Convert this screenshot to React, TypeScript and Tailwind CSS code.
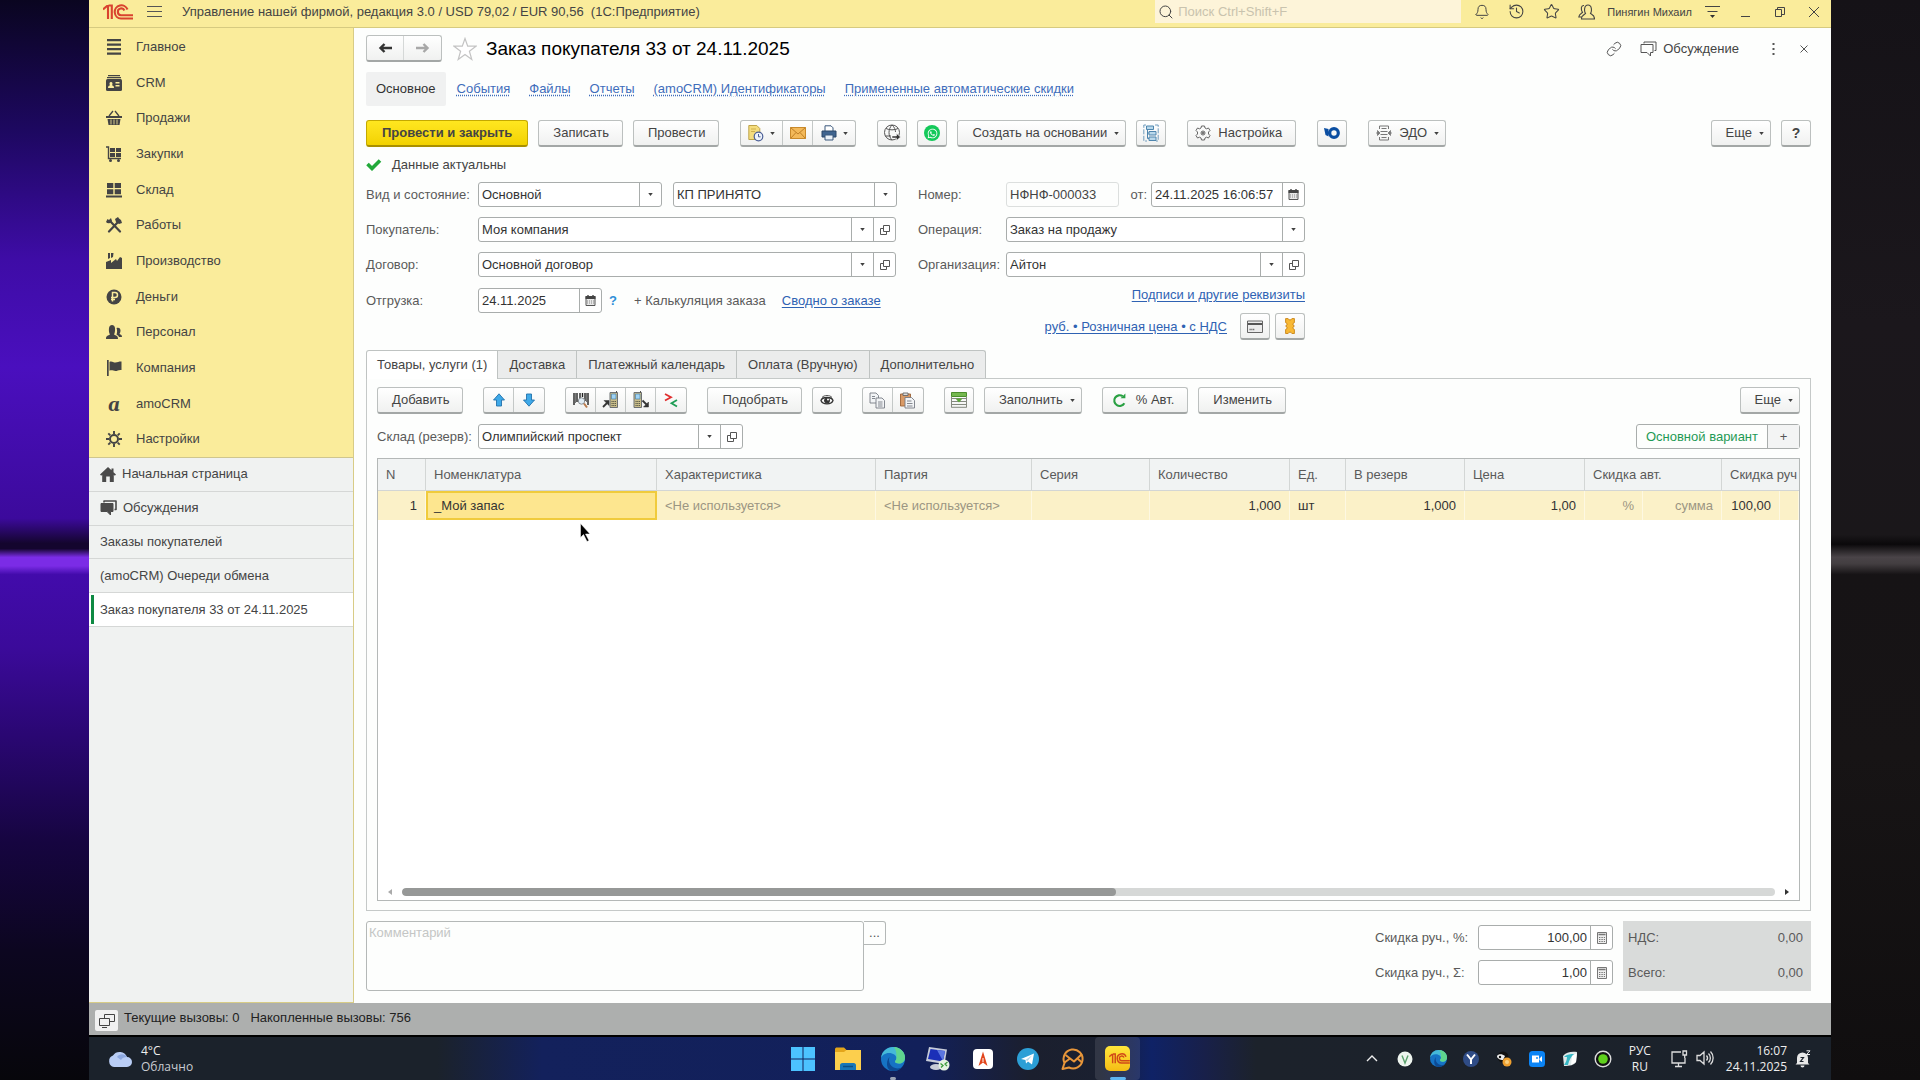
import React from 'react';
import { Bell, History, Link, Search, Star } from 'lucide-react';
import { FaWhatsapp } from 'react-icons/fa';

const LogoIcon: React.FC<{ className?: string }> = ({ className }) => (
  <svg viewBox="0 0 30 16" className={className} fill="none" stroke="currentColor" strokeWidth="2.1">
    <path d="M0 5.5 4 2H5V15M8.8 15V1.500H5.5" />
    <path d="M24.5 5.5A6.6 6.6 0 1 0 18 14.5H30" />
    <path d="M21.4 6.500A3.4 3.4 0 1 0 18 11.2H30" />
  </svg>
);

const Caret = () => (
  <svg viewBox="0 0 6 4" className="h-[3px] w-[5px] shrink-0" fill="#404040">
    <path d="M0 0h6L3 4z" />
  </svg>
);

const OpenIcon = () => (
  <svg viewBox="0 0 10 10" className="size-2.5" fill="none" stroke="#555" strokeWidth="1">
    <path d="M3.5.5h6v6h-6zM3.5 3.5h-3v6h6v-3" />
  </svg>
);

const CalendarIcon = () => (
  <svg viewBox="0 0 11 11" className="size-[11px]">
    <path d="M1 1.5h9v9H1z" fill="#e8e8e8" stroke="#555" />
    <path d="M.5 1h10v3H.5z" fill="#444" />
    <path d="M3 0v2M8 0v2" stroke="#444" strokeWidth="1.4" />
    <path d="M2 6h7M2 8h7" stroke="#888" strokeDasharray="1 1" />
  </svg>
);

const CalcIcon = () => (
  <svg viewBox="0 0 10 12" className="h-3 w-2.5" fill="none">
    <path d="M.5.5h9v11h-9z" stroke="#777" fill="#eee" />
    <path d="M1.5 2.5h7" stroke="#777" strokeWidth="1.5" />
    <path d="M2 5.5h6M2 7.5h6M2 9.5h6" stroke="#777" strokeDasharray="1.4 1" />
  </svg>
);

const HomeIcon = () => (
  <svg viewBox="0 0 16 15" className="h-[15px] w-4" fill="#4a4a4a">
    <path d="M8 0l3.500 3.300V1.500h2V5.200L16 7.500 14.800 8.700 13.800 7.800V15H9.800V9.500H6.200V15H2.200V7.800L1.200 8.700 0 7.500z" />
  </svg>
);

const ChatIcon: React.FC<{ filled?: boolean }> = ({ filled }) => (
  <svg viewBox="0 0 17 16" className="h-4 w-[17px] shrink-0" fill={filled ? '#4a4a4a' : 'none'} stroke={filled ? '#4a4a4a' : '#555'} strokeLinejoin="round">
    <path d="M4 2.5V1h12v8.5h-1.5" fill="none" strokeWidth={filled ? 1.6 : 1} />
    <path d="M1 3.5h12v8h-2.5v3.5L7 11.500H1z" />
  </svg>
);

const sectionIcons: Record<string, React.ReactNode> = {
  main: <path d="M1 0h14v2.200H1zM1 4.500h14v2.200H1zM1 9h14v2.200H1zM1 13.500h14v2.200H1z" />,
  crm: (
    <>
      <path d="M2 0h12v1.3H2zM1 2h14v1.3H1z" />
      <rect x="0" y="4" width="16" height="12" rx="1.5" />
      <path d="M2 13c0-2 1-2.5 2-2.5-1-2-.5-3.5 1-3.5s2 1.500 1 3.5c1 0 2 .5 2 2.5zM9.5 7h4v1.5h-4zM9.5 10h4v1.5h-4z" fill="#faec9b" />
    </>
  ),
  sales: (
    <>
      <path d="M0 6h16v2H0zM1.5 9h13l-1 6h-11z" />
      <path d="M3 6l4-5M13 6 9 1" stroke="currentColor" strokeWidth="1.3" />
      <path d="M5 9.5v5M8 9.5v5M11 9.5v5" stroke="#faec9b" strokeWidth=".8" />
    </>
  ),
  purchases: (
    <>
      <path d="M4 2h5v4H4zM10 2h5v4h-5zM4 7h5v4H4zM10 7h5v4h-5z" />
      <path d="M0 1h2.5v11.5H15" fill="none" stroke="currentColor" strokeWidth="1.4" />
      <circle cx="4.5" cy="14.5" r="1.5" />
      <circle cx="12.5" cy="14.5" r="1.5" />
    </>
  ),
  stock: <path d="M1 1h6.3v5H1zM8.7 1H15v5H8.7zM1 7.2h6.3v5H1zM8.7 7.2H15v5H8.7zM0 13.5h16v2H0z" />,
  works: (
    <>
      <path d="M4 4l10 10.5M12 5 3 14.5" stroke="currentColor" strokeWidth="2.2" strokeLinecap="round" />
      <path d="M0 5a3.5 3.5 0 0 0 6-1L5 1 3 3 1.5 2zM9 2l3-2 1 1.500L15 3l1 3-3 1-3-2z" />
    </>
  ),
  factory: <path d="M0 9l5-2v3l5-4 1 2 3-4 2 1v11H0zM2 0h2v5L2 6zM5 0h2.5L7 4 5 5z" />,
  money: (
    <>
      <circle cx="8" cy="8" r="7.5" />
      <path d="M6.5 12.5v-9H9a2.5 2.5 0 0 1 0 5H5M5 10.5h4" fill="none" stroke="#faec9b" strokeWidth="1.5" />
    </>
  ),
  staff: (
    <>
      <path d="M0 15c0-3 1-3 4-4.5C3 9 2.7 7 3 4c.3-2 1.500-3 3-3s2.8 1 3 3c.2 3-.1 5-1 6.500 3 1.500 4 1.500 4 4.500z" />
      <path d="M10.5 4c2.500-1 4 .5 4 2.500 0 1.500-.5 2.500-1 3.500 1.500.8 2.500 1 2.500 3h-3c-.5-1.500-1.500-2-2.500-2.500.8-2 .8-4.500 0-6.500z" />
    </>
  ),
  company: <path d="M1 0h1.7v16H1zM3.5 2c2-1.500 4 .8 6 .5s3-1 6-1v8.500c-3-.5-4 1-6 1s-4-1.500-6-.2z" />,
  settings: (
    <>
      <circle cx="8" cy="8" r="4" fill="none" stroke="currentColor" strokeWidth="2" />
      <path d="M8 0v3M8 13v3M0 8h3M13 8h3M2.3 2.3l2 2M11.7 11.7l2 2M2.3 13.7l2-2M11.7 4.3l2-2" stroke="currentColor" strokeWidth="1.9" />
    </>
  ),
};

const sections = [
  { icon: 'main', title: 'Главное' },
  { icon: 'crm', title: 'CRM' },
  { icon: 'sales', title: 'Продажи' },
  { icon: 'purchases', title: 'Закупки' },
  { icon: 'stock', title: 'Склад' },
  { icon: 'works', title: 'Работы' },
  { icon: 'factory', title: 'Производство' },
  { icon: 'money', title: 'Деньги' },
  { icon: 'staff', title: 'Персонал' },
  { icon: 'company', title: 'Компания' },
  { icon: 'amo', title: 'amoCRM' },
  { icon: 'settings', title: 'Настройки' },
];

const openWindows = [
  { title: 'Начальная страница', icon: <HomeIcon /> },
  { title: 'Обсуждения', icon: <ChatIcon filled /> },
  { title: 'Заказы покупателей' },
  { title: '(amoCRM) Очереди обмена' },
  { title: 'Заказ покупателя 33 от 24.11.2025', active: true },
];

const formLinks = ['События', 'Файлы', 'Отчеты', '(amoCRM) Идентификаторы', 'Примененные автоматические скидки'];
const tabs = ['Товары, услуги (1)', 'Доставка', 'Платежный календарь', 'Оплата (Вручную)', 'Дополнительно'];

const buttonLook =
  'flex h-[27px] shrink-0 items-center justify-center whitespace-nowrap rounded-[3px] border border-b-2 border-[#bcc0bf] border-b-[#a3a7a6] bg-linear-to-b from-white to-[#f0f1f0] text-[#444] hover:to-[#e4e6e5]';

const TextButton: React.FC<{ children: React.ReactNode; icon?: React.ReactNode; menu?: boolean }> = ({ children, icon, menu }) => (
  <button type="button" className={`${buttonLook} ${icon ? 'gap-[7px] pl-[7px]' : 'gap-[7px] pl-3.5'} ${menu ? 'pr-1.5' : 'pr-[13px]'}`}>
    {icon}
    {children}
    {menu && <Caret />}
  </button>
);

const IconButton: React.FC<{ children: React.ReactNode; title: string }> = ({ children, title }) => (
  <button type="button" title={title} aria-label={title} className={`${buttonLook} w-[30px]`}>
    {children}
  </button>
);

interface GroupItem {
  title: string;
  icon: React.ReactNode;
  menu?: boolean;
}

const ButtonGroup: React.FC<{ items: GroupItem[] }> = ({ items }) => (
  <div className={`${buttonLook} divide-x divide-[#c4c8c7]`}>
    {items.map((item) => (
      <button
        key={item.title}
        type="button"
        title={item.title}
        aria-label={item.title}
        className={`flex h-full items-center justify-center gap-1.5 ${item.menu ? 'w-[42px]' : 'w-[30px]'}`}
      >
        {item.icon}
        {item.menu && <Caret />}
      </button>
    ))}
  </div>
);

const fieldLook = 'flex h-[25px] shrink-0 rounded-[3px] border border-[#a9adac] bg-white text-[#333]';
const cellLook = 'flex w-[22px] shrink-0 items-center justify-center border-l border-[#a9adac]';

const SelectField: React.FC<{ id: string; value: string; width: string; open?: boolean; label?: string }> = ({ id, value, width, open, label }) => (
  <div className={`${fieldLook} ${width}`}>
    <select id={id} aria-label={label} className="min-w-0 flex-1 appearance-none bg-transparent px-[3px] outline-none">
      <option>{value}</option>
    </select>
    <span className={cellLook}><Caret /></span>
    {open && <button type="button" aria-label="Открыть" className={cellLook}><OpenIcon /></button>}
  </div>
);

const InputField: React.FC<{ id: string; value: string; width: string; icon: React.ReactNode; action: string; right?: boolean }> = ({ id, value, width, icon, action, right }) => (
  <div className={`${fieldLook} ${width}`}>
    <input id={id} defaultValue={value} className={`min-w-0 flex-1 bg-transparent px-[3px] outline-none ${right ? 'text-right' : ''}`} />
    <button type="button" aria-label={action} className={cellLook}>{icon}</button>
  </div>
);

const Label: React.FC<{ htmlFor: string; children: string; width: string }> = ({ htmlFor, children, width }) => (
  <label htmlFor={htmlFor} className={`shrink-0 whitespace-nowrap text-[#5a5a5a] ${width}`}>{children}</label>
);

const PhoneIcon: React.FC<{ out?: boolean }> = ({ out }) => (
  <svg viewBox="0 0 18 18" className="size-[18px]">
    <g transform={out ? 'translate(-6 0)' : undefined}>
      <path d="M8 1.500h7.500v15H8z" fill="#c9bd8a" stroke="#6d7073" />
      <path d="M9.500 3h4.500v5H9.500z" fill="#9fd3f5" stroke="#4f83a8" strokeWidth=".7" />
      <path d="M9.500 10.500h4.500M9.500 12.500h4.500M9.500 14.500h4.500" stroke="#5c5c4a" strokeDasharray="1.2 .5" />
      <path d="M14.500 0v2" stroke="#555" />
    </g>
    {out ? (
      <g fill="#333" stroke="#333">
        <path d="M10.500 9.500l4 4" strokeWidth="1.8" />
        <path d="M16.500 11v5h-5z" strokeWidth=".5" />
      </g>
    ) : (
      <g fill="#333" stroke="#333">
        <path d="M1 16l4-4" strokeWidth="1.8" />
        <path d="M2 9.500h5v5z" strokeWidth=".5" />
      </g>
    )}
  </svg>
);

const ArrowIcon: React.FC<{ down?: boolean }> = ({ down }) => (
  <svg viewBox="0 0 14 14" className={`size-3.5 ${down ? 'rotate-180' : ''}`}>
    <path d="M7 .8 12.500 7H9.500v6h-5V7H1.500z" fill="#3fa9e8" stroke="#2272ab" strokeWidth=".9" />
  </svg>
);

const PaperIcon = () => (
  <svg viewBox="0 0 16 18" className="h-[18px] w-4">
    <path d="M.8 1.500h8l3 3v11h-11z" fill="#f5dd7e" stroke="#b89c3d" strokeWidth=".9" />
    <path d="M3 5h5M3 7.500h4" stroke="#cfb04d" />
    <circle cx="10.500" cy="12.500" r="4.300" fill="#eef3fb" stroke="#4b5f96" strokeWidth="1.2" />
    <path d="M10.500 10v2.800h2" fill="none" stroke="#4b5f96" />
  </svg>
);

const MailIcon = () => (
  <svg viewBox="0 0 16 12" className="h-3 w-4">
    <path d="M.5.5h15v11H.5z" fill="#f3b95a" stroke="#c98a2b" />
    <path d="M.5.5 8 7 15.500.5M.5 11.500 6 5.500M15.500 11.500 10 5.500" fill="none" stroke="#b97820" strokeWidth=".9" />
  </svg>
);

const PrinterIcon = () => (
  <svg viewBox="0 0 16 16" className="size-4">
    <path d="M4 .8h6l2 2V7H4z" fill="#fff" stroke="#3b587c" />
    <path d="M1 6h14v6H1z" fill="#3f648f" stroke="#2b4768" />
    <path d="M4 10h8v5H4z" fill="#e9f0f7" stroke="#3b587c" />
  </svg>
);

const GlobeIcon = () => (
  <svg viewBox="0 0 18 18" className="size-[18px]" fill="none" stroke="#555">
    <circle cx="9" cy="8.500" r="7.500" />
    <path d="M9 1c-4 4-4 11 0 15M9 1c2.500 2 3.500 5 3.500 7M3 4.500c3 1.800 9 1.800 12 0M2 12h6" />
    <path d="M9 12h4.500V9.500L17.500 13l-4 3.500V14H9z" fill="#333" stroke="#fff" strokeWidth=".5" />
  </svg>
);

const StructureIcon = () => (
  <svg viewBox="0 0 16 18" className="h-[18px] w-4" fill="none" stroke="#4f86ae">
    <path d="M3 1H.8v16H4M12 1h3.200v16H13" strokeDasharray="5 1.5" strokeWidth=".8" />
    <path d="M3.500 2h7v3.500h-7zM6 7.500h7V11H6zM6 13h7v3.500H6z" fill="#b9d8eb" />
    <path d="M4.500 5.500v9H6M4.500 9H6" />
  </svg>
);

const GearIcon = () => (
  <svg viewBox="0 0 16 16" className="size-4" fill="none" stroke="#666">
    <path d="M6.500 1h3l.5 2 1.500.8 2-.8 1.500 2.500L13.500 7v2l1.500 1.500-1.500 2.500-2-.8-1.500.8-.5 2h-3L6 13l-1.500-.8-2 .8L1 10.500 2.500 9V7L1 5.500 2.500 3l2 .8L6 3z" />
    <circle cx="8" cy="8" r="2" />
    <circle cx="8" cy="8" r=".8" fill="#666" />
  </svg>
);

const EdoIcon = () => (
  <svg viewBox="0 0 16 16" className="size-4" fill="none" stroke="#777">
    <path d="M3.500 4V1h9v3M3.500 12v3h9v-3M5.500 3.500h5M4.500 6.500h7M4.500 9.500h7M5.500 12.500h5" />
    <path d="M0 8h3M1.500 5.500 4 8l-2.500 2.500zM16 8h-3M14.500 5.500 12 8l2.500 2.500z" fill="#777" strokeWidth=".8" />
  </svg>
);

const BarcodeIcon = () => (
  <svg viewBox="0 0 18 18" className="size-[18px]" fill="none">
    <path d="M2 2v12M5 2v9M8 2v7M10.500 2v4M13 2v8M16 2v12" stroke="#222" strokeWidth="1.4" />
    <path d="M3.500 2v10M14.500 2v9" stroke="#222" strokeWidth=".6" />
    <circle cx="9.500" cy="10" r="3.200" fill="#e1edf5" stroke="#8a8f94" />
    <path d="M12 12.500l3 4" stroke="#b97b4d" strokeWidth="2" />
  </svg>
);

const CompareIcon = () => (
  <svg viewBox="0 0 16 16" className="size-4" fill="none" strokeWidth="1.8">
    <path d="M2 2l6 3.200L2 8.500" stroke="#e02f2f" />
    <path d="M14 8 8.500 11.200 14 14.500" stroke="#1f9e56" />
  </svg>
);

const EyeIcon = () => (
  <svg viewBox="0 0 14 12" className="h-3 w-3.5" fill="none" stroke="#333" strokeWidth="1.3">
    <path d="M1 6.500C2 2.500 12 2.500 13 6.500 11.500 11 2.500 11 1 6.500z" />
    <circle cx="7" cy="6.500" r="2.300" fill="#333" />
    <circle cx="8" cy="5.500" r="1" fill="#fff" stroke="none" />
    <path d="M2 3.500C4 .8 10 .8 12 3.500" strokeWidth=".8" />
  </svg>
);

const CopyIcon = () => (
  <svg viewBox="0 0 17 17" className="size-[17px]" fill="#f2f4f6" stroke="#777c85" strokeWidth=".9">
    <path d="M1 1h6l2.500 2.500V11H1z" />
    <path d="M7 6h6l2.500 2.500V16H7z" />
    <path d="M3 4.500h3M3 6.500h3M9 10h4.500M9 12h4.500M9 14h4.500" />
  </svg>
);

const PasteIcon = () => (
  <svg viewBox="0 0 17 17" className="size-[17px]" strokeWidth=".9">
    <path d="M1.500 2h10v12h-10z" fill="#d99a66" stroke="#9c6236" />
    <path d="M4 1h5v2.500H4z" fill="#ddd" stroke="#666" />
    <path d="M6 5.500h6.500L15.500 8.500V16H6z" fill="#f2f4f6" stroke="#777c85" />
    <path d="M8 9h4.500M8 11.500h5.500M8 14h5.500" stroke="#777c85" />
  </svg>
);

const InsertRowsIcon = () => (
  <svg viewBox="0 0 16 16" className="size-4" fill="none">
    <path d="M.5.5h15v4H.5z" fill="#75b84f" stroke="#4b8d2d" />
    <path d="M.5 6.500h15M.5 9.500h15M.5 12.500h15M.5 15.300h15M.5 5v10.500M15.500 5v10.500" stroke="#84897f" />
    <path d="M4.500 6.500h7L8 10.500z" fill="#5aa637" />
  </svg>
);

const RefreshIcon = () => (
  <svg viewBox="0 0 14 14" className="mx-0.5 size-[15px]" fill="none" stroke="#2aa043" strokeWidth="2">
    <path d="M11.500 9.500A5 5 0 1 1 10 3" />
    <path d="M8 4.800h4.500V.5z" fill="#2aa043" stroke="none" />
  </svg>
);

const CardIcon = () => (
  <svg viewBox="0 0 16 13" className="h-[13px] w-4" fill="none">
    <path d="M.5 1h15v11.500H.5z" fill="#ececec" stroke="#666" />
    <path d="M1 4h14" stroke="#555" strokeWidth="2" />
    <path d="M2.500 9.500h5" stroke="#666" strokeWidth="1.5" strokeDasharray="1.2 .6" />
  </svg>
);

const TicketIcon = () => (
  <svg viewBox="0 0 10 16" className="h-4 w-2.5">
    <path d="M.6.6h2.500a2 2 0 0 0 3.800 0h2.500v4L8 5.500V7l1.400 1L8 9v1.500l1.400 1v4H6.900a2 2 0 0 0-3.800 0H.6v-4l1.400-1V9L.6 8 2 7V5.500L.6 4.600z" fill="#f8b834" stroke="#c98516" strokeWidth=".9" />
  </svg>
);

const UsersIcon = () => (
  <svg viewBox="0 0 17 16" className="h-4 w-[17px]" fill="none" stroke="#444" strokeWidth="1.1">
    <path d="M6 1.500C3 1 2.500 5 4.500 8.500 2.500 10 1 10.500 .8 13H4" />
    <path d="M7.500 9.500C6 7 6 1 10 1s4 6 2.500 8.500c2.500 1.500 4 1.500 4 5.500h-13c0-3.500 1.500-4 4-5.500z" />
  </svg>
);

const TopBar = () => (
  <header className="flex h-7 shrink-0 items-center border-b border-[#d6ca80] bg-[#faec9b] pb-1 pl-3.5 text-[#444]">
    <LogoIcon className="h-4 w-[30px] shrink-0 text-[#d9432f]" />
    <button type="button" aria-label="Меню" className="ml-3.5 flex w-[15px] flex-col gap-1">
      <span className="h-px bg-[#555]" />
      <span className="h-px bg-[#555]" />
      <span className="h-px bg-[#555]" />
    </button>
    <h1 className="ml-5 flex-1 whitespace-pre">{'Управление нашей фирмой, редакция 3.0 / USD 79,02 / EUR 90,56  (1С:Предприятие)'}</h1>
    <div className="mr-[3px] flex h-full w-[306px] items-center gap-1 bg-[#fdf4d9] pl-[3px]">
      <Search size={16} strokeWidth={1.5} color="#444" />
      <input aria-label="Поиск" placeholder="Поиск Ctrl+Shift+F" className="min-w-0 flex-1 bg-transparent outline-none placeholder:text-[#c9c3ae]" />
    </div>
    {[
      { title: 'Оповещения', icon: <Bell size={16} strokeWidth={1.5} /> },
      { title: 'История', icon: <History size={17} strokeWidth={1.5} /> },
      { title: 'Избранное', icon: <Star size={17} strokeWidth={1.5} /> },
      { title: 'Пользователь', icon: <UsersIcon /> },
    ].map((item) => (
      <button key={item.title} type="button" title={item.title} className="flex w-[35px] justify-center">
        {item.icon}
      </button>
    ))}
    <span className="px-[3px] text-[11px]">Пинягин Михаил</span>
    <button type="button" aria-label="Сервис" className="flex w-[34px] justify-center">
      <svg viewBox="0 0 15 14" className="h-3.5 w-[15px]" stroke="#444" fill="#333"><path d="M0 1.500h15M2.500 6.500h10" /><path d="M5 10h5l-2.500 3z" stroke="none" /></svg>
    </button>
    <button type="button" aria-label="Свернуть" className="flex w-[34px] justify-center">
      <svg viewBox="0 0 10 10" className="size-2.5" stroke="#444"><path d="M0 9.500h9" /></svg>
    </button>
    <button type="button" aria-label="Восстановить" className="flex w-[34px] justify-center">
      <svg viewBox="0 0 10 10" className="size-2.5" stroke="#444" fill="none"><path d="M.5 2.500h6v7h-6zM2.500 2.500v-2h7v7h-3" /></svg>
    </button>
    <button type="button" aria-label="Закрыть" className="flex w-[34px] justify-center">
      <svg viewBox="0 0 10 10" className="size-2.5" stroke="#444"><path d="M0 0l10 10M10 0 0 10" /></svg>
    </button>
  </header>
);

const Sidebar = () => (
  <aside className="flex w-[265px] shrink-0 flex-col border-r border-b border-[#d8cc86] bg-[#f0f2f1] text-[#444]">
    <nav className="flex h-[430px] flex-col border-b border-[#cfc68e] bg-[#faec9b] pt-px">
      {sections.map((section) => (
        <button key={section.title} type="button" className="flex flex-1 items-center gap-3.5 pl-[17px] text-left hover:bg-[#f5e27c]">
          {section.icon === 'amo' ? (
            <span className="w-4 text-center font-serif text-[21px] leading-4 font-bold italic">a</span>
          ) : (
            <svg viewBox="0 0 16 16" className="size-4" fill="currentColor">{sectionIcons[section.icon]}</svg>
          )}
          {section.title}
        </button>
      ))}
    </nav>
    <nav className="flex h-[169px] flex-col">
      {openWindows.map((item) => (
        <button
          key={item.title}
          type="button"
          className={`flex flex-1 items-center gap-1.5 border-b border-[#d5d7d6] text-left ${
            item.active ? 'bg-white pl-0.5' : 'pl-[11px]'
          }`}
        >
          {item.active && <span className="h-[29px] w-[3px] bg-[#0e8a43]" />}
          {item.icon}
          {item.title}
        </button>
      ))}
    </nav>
  </aside>
);

const FormHeader = () => (
  <>
    <div className="flex h-[25px] items-center">
      <div className={`${buttonLook} divide-x divide-[#d5d8d7]`}>
        {[false, true].map((forward) => (
          <button key={String(forward)} type="button" aria-label={forward ? 'Вперед' : 'Назад'} className="flex h-full w-[37px] items-center justify-center">
            <svg viewBox="0 0 14 12" className={`h-3 w-3.5 ${forward ? 'rotate-180' : ''}`} fill="none" stroke={forward ? '#a8a8a8' : '#333'} strokeWidth="2.4">
              <path d="M14 6H2M6.500 2 2.500 6l4 4" />
            </svg>
          </button>
        ))}
      </div>
      <button type="button" aria-label="В избранное" className="ml-[11px]">
        <svg viewBox="0 0 24 24" className="size-6" fill="#fff" stroke="#c3c3c3" strokeWidth="1.2">
          <path d="M12 1.500l2.700 7.700h8.300l-6.600 5 2.400 8.300L12 17.600l-6.800 4.900 2.400-8.300L1 9.200h8.300z" />
        </svg>
      </button>
      <h2 className="ml-[9px] flex-1 text-[19px] text-black">Заказ покупателя 33 от 24.11.2025</h2>
      <button type="button" aria-label="Ссылка"><Link size={16} strokeWidth={1.5} color="#555" /></button>
      <button type="button" className="ml-[18px] flex items-center gap-1.5 text-[#444]">
        <ChatIcon />
        Обсуждение
      </button>
      <button type="button" aria-label="Действия" className="ml-[27px] flex w-3.5 justify-center">
        <svg viewBox="0 0 3 12" className="h-3 w-[3px]" fill="#555"><path d="M.5 0h2v2h-2zM.5 5h2v2h-2zM.5 10h2v2h-2z" /></svg>
      </button>
      <button type="button" aria-label="Закрыть форму" className="ml-[17px] flex w-3.5 justify-center">
        <svg viewBox="0 0 8 8" className="size-2" stroke="#555"><path d="M.5.5l7 7M7.500.5l-7 7" /></svg>
      </button>
    </div>

    <nav className="mt-[11px] flex h-[34px] items-center gap-[19px]">
      <span className="-mr-2 flex h-full items-center rounded-xs bg-[#f0f1f1] px-2.5 text-[#333]">Основное</span>
      {formLinks.map((link) => (
        <a key={link} href="#" className="text-[#3f6dbb] underline decoration-dotted underline-offset-2">{link}</a>
      ))}
    </nav>

    <div className="mt-3.5 flex items-center gap-[21px]">
      <div className="flex gap-2.5">
        <button type="button" className="h-[27px] rounded-[3px] border border-b-2 border-[#c4a900] border-b-[#a99000] bg-linear-to-b from-[#ffe71f] to-[#f2d200] px-[15px] font-bold text-[#444]">
          Провести и закрыть
        </button>
        <TextButton>Записать</TextButton>
        <TextButton>Провести</TextButton>
      </div>
      <ButtonGroup
        items={[
          { title: 'Отчеты', icon: <PaperIcon />, menu: true },
          { title: 'Отправить письмо', icon: <MailIcon /> },
          { title: 'Печать', icon: <PrinterIcon />, menu: true },
        ]}
      />
      <div className="flex gap-2.5">
        <IconButton title="Открыть на сайте"><GlobeIcon /></IconButton>
        <IconButton title="WhatsApp">
          <span className="flex size-4 items-center justify-center rounded-full bg-[#14c95a] text-white"><FaWhatsapp size={11} /></span>
        </IconButton>
        <TextButton menu>Создать на основании</TextButton>
        <IconButton title="Структура подчиненности"><StructureIcon /></IconButton>
      </div>
      <TextButton icon={<GearIcon />}>Настройка</TextButton>
      <IconButton title="ЮKassa">
        <svg viewBox="0 0 16 14" className="h-3.5 w-4" fill="#0b4ea2">
          <path d="M0 2l4.500 1v7.500L1.500 9z" />
          <circle cx="10" cy="7" r="4.300" fill="none" stroke="#0b4ea2" strokeWidth="3.200" />
          <path d="M4 5.500h3v3H4z" />
        </svg>
      </IconButton>
      <TextButton icon={<EdoIcon />} menu>ЭДО</TextButton>
      <div className="ml-auto flex gap-2.5">
        <TextButton menu>Еще</TextButton>
        <button type="button" aria-label="Справка" className={`${buttonLook} w-[30px] text-[14px] font-bold`}>?</button>
      </div>
    </div>
  </>
);

const linkLook = 'text-[#2f62b3] underline underline-offset-2';

const FormFields = () => (
  <>
    <div className="flex h-[35px] items-center gap-2.5 text-[#444]">
      <svg viewBox="0 0 16 12" className="h-3 w-4" fill="none" stroke="#22a93a" strokeWidth="3.6"><path d="M1.500 5l4.500 4.500L14 1.500" /></svg>
      Данные актуальны
    </div>
    <div className="flex items-start gap-[21px]">
      <div className="flex flex-col gap-2.5">
        <div className="flex items-center">
          <Label htmlFor="kind" width="w-28">Вид и состояние:</Label>
          <SelectField id="kind" value="Основной" width="w-[184px]" />
          <span className="w-[11px]" />
          <SelectField id="state" label="Состояние" value="КП ПРИНЯТО" width="w-56" />
        </div>
        <div className="flex items-center">
          <Label htmlFor="buyer" width="w-28">Покупатель:</Label>
          <SelectField id="buyer" value="Моя компания" width="w-[418px]" open />
        </div>
        <div className="flex items-center">
          <Label htmlFor="contract" width="w-28">Договор:</Label>
          <SelectField id="contract" value="Основной договор" width="w-[418px]" open />
        </div>
        <div className="flex items-center pt-px">
          <Label htmlFor="shipment" width="w-28">Отгрузка:</Label>
          <InputField id="shipment" value="24.11.2025" width="w-[124px]" icon={<CalendarIcon />} action="Выбрать дату" />
          <button type="button" aria-label="Подсказка" className="ml-[7px] font-bold text-[#2f8fd8]">?</button>
          <button type="button" className="ml-[17px] text-[#5a5a5a]">+ Калькуляция заказа</button>
          <a href="#" className={`ml-4 ${linkLook}`}>Сводно о заказе</a>
        </div>
      </div>

      <div className="flex w-[387px] flex-col">
        <div className="flex items-center">
          <Label htmlFor="number" width="w-[88px]">Номер:</Label>
          <input id="number" defaultValue="НФНФ-000033" readOnly className="h-[25px] w-[113px] rounded-[3px] border border-[#dcdfde] px-[3px] text-[#444] outline-none" />
          <label htmlFor="date" className="flex-1 pr-1 text-right text-[#5a5a5a]">от:</label>
          <InputField id="date" value="24.11.2025 16:06:57" width="w-[154px]" icon={<CalendarIcon />} action="Выбрать дату и время" />
        </div>
        <div className="mt-2.5 flex items-center">
          <Label htmlFor="operation" width="w-[88px]">Операция:</Label>
          <SelectField id="operation" value="Заказ на продажу" width="w-[299px]" />
        </div>
        <div className="mt-2.5 flex items-center">
          <Label htmlFor="org" width="w-[88px]">Организация:</Label>
          <SelectField id="org" value="Айтон" width="w-[299px]" open />
        </div>
        <div className="flex h-9 items-center justify-end">
          <a href="#" className={linkLook}>Подписи и другие реквизиты</a>
        </div>
        <div className="flex items-center justify-end gap-[5px]">
          <a href="#" className={`mr-2 ${linkLook}`}>руб. • Розничная цена • с НДС</a>
          <IconButton title="Оплата картой"><CardIcon /></IconButton>
          <IconButton title="Скидочная карта"><TicketIcon /></IconButton>
        </div>
      </div>
    </div>
  </>
);

const columnWidths = ['w-12', 'w-[231px]', 'w-[219px]', 'w-[156px]', 'w-[118px]', 'w-[140px]', 'w-14', 'w-[119px]', 'w-[120px]', 'w-[58px]', 'w-[79px]', 'w-[58px]', ''];

const columns = [
  { title: 'N' },
  { title: 'Номенклатура' },
  { title: 'Характеристика' },
  { title: 'Партия' },
  { title: 'Серия' },
  { title: 'Количество' },
  { title: 'Ед.' },
  { title: 'В резерв' },
  { title: 'Цена' },
  { title: 'Скидка авт.', span: 2 },
  { title: 'Скидка руч', span: 2 },
];

const rowCells = [
  { text: '1', look: 'pr-2 text-right' },
  { text: '_Мой запас', look: 'border-2 border-[#f0cb3c] bg-[#fde68f] pl-1.5' },
  { text: '<Не используется>', look: 'pl-2 text-[#9b9683]' },
  { text: '<Не используется>', look: 'pl-2 text-[#9b9683]' },
  { text: '', look: '' },
  { text: '1,000', look: 'pr-2 text-right' },
  { text: 'шт', look: 'pl-2' },
  { text: '1,000', look: 'pr-2 text-right' },
  { text: '1,00', look: 'pr-2 text-right' },
  { text: '%', look: 'pr-2 text-right text-[#9b9683]' },
  { text: 'сумма', look: 'pr-2 text-right text-[#9b9683]' },
  { text: '100,00', look: 'pr-2 text-right' },
  { text: '', look: '' },
];

const GoodsTable = () => (
  <div className="relative mt-[9px] flex min-h-0 flex-1 flex-col overflow-hidden border border-[#b4b8b7] bg-white">
    <table className="w-full table-fixed border-separate border-spacing-0">
      <colgroup>
        {columnWidths.map((width, i) => <col key={i} className={width} />)}
      </colgroup>
      <thead>
        <tr className="h-8 bg-[#f1f3f3] text-left text-[#5a5a5a]">
          {columns.map((column, i) => (
            <th
              key={column.title}
              colSpan={column.span}
              className={`overflow-hidden whitespace-nowrap border-b border-[#d3d6d5] pl-2 font-normal ${i < columns.length - 1 ? 'border-r' : ''}`}
            >
              {column.title}
            </th>
          ))}
        </tr>
      </thead>
      <tbody>
        <tr className="h-[29px] bg-[#fbf1c8] text-[#333]">
          {rowCells.map((cell, i) => (
            <td key={i} className={`whitespace-nowrap ${i === 1 ? '' : 'border-r border-[#fdf8e2]'} ${cell.look}`}>{cell.text}</td>
          ))}
        </tr>
      </tbody>
    </table>

    <div className="mt-auto mb-0.5 flex h-3 items-center gap-2.5 px-2.5">
      <svg viewBox="0 0 4 6" className="h-1.5 w-1" fill="#aaa"><path d="M4 0v6L0 3z" /></svg>
      <div className="h-2 flex-1 overflow-hidden rounded-full bg-[#d6d8d7]">
        <div className="h-full w-[52%] rounded-full bg-[#969897]" />
      </div>
      <svg viewBox="0 0 4 6" className="h-1.5 w-1" fill="#333"><path d="M0 0v6l4-3z" /></svg>
    </div>

    <svg viewBox="0 0 12 19" className="absolute top-16 left-[202px] h-[19px] w-3" fill="#000" stroke="#fff" strokeWidth=".5">
      <path d="M.5.5v14l3-3 3.500 7 2-1-3.500-6.500h4.500z" />
    </svg>
  </div>
);

const GoodsPanel = () => (
  <section className="mt-2.5 flex min-h-0 flex-1 flex-col">
    <div role="tablist" className="flex h-7 shrink-0 text-[#444]">
      {tabs.map((tab, i) => (
        <button
          key={tab}
          type="button"
          role="tab"
          aria-selected={i === 0}
          className={
            i === 0
              ? 'z-10 -mb-px rounded-tl-[3px] border border-b-0 border-[#bfc3c2] bg-white px-2.5'
              : 'border-t border-r border-[#bfc3c2] bg-[#ebecec] px-[11px] last:rounded-tr-[3px]'
          }
        >
          {tab}
        </button>
      ))}
    </div>
    <div className="flex min-h-0 flex-1 flex-col border border-[#c5c9c8] px-2.5 pt-2 pb-[9px]">
      <div className="flex shrink-0 items-center gap-5">
        <TextButton>Добавить</TextButton>
        <ButtonGroup items={[{ title: 'Вверх', icon: <ArrowIcon /> }, { title: 'Вниз', icon: <ArrowIcon down /> }]} />
        <ButtonGroup
          items={[
            { title: 'Поиск по штрихкоду', icon: <BarcodeIcon /> },
            { title: 'Загрузить из ТСД', icon: <PhoneIcon /> },
            { title: 'Выгрузить в ТСД', icon: <PhoneIcon out /> },
            { title: 'Сравнить', icon: <CompareIcon /> },
          ]}
        />
        <div className="flex gap-2.5">
          <TextButton>Подобрать</TextButton>
          <IconButton title="Показать"><EyeIcon /></IconButton>
        </div>
        <ButtonGroup items={[{ title: 'Копировать', icon: <CopyIcon /> }, { title: 'Вставить', icon: <PasteIcon /> }]} />
        <div className="flex gap-2.5">
          <IconButton title="Вставить строки"><InsertRowsIcon /></IconButton>
          <TextButton menu>Заполнить</TextButton>
        </div>
        <div className="flex gap-2.5">
          <TextButton icon={<RefreshIcon />}>% Авт.</TextButton>
          <TextButton>Изменить</TextButton>
        </div>
        <div className="ml-auto"><TextButton menu>Еще</TextButton></div>
      </div>
      <div className="mt-2.5 flex shrink-0 items-center">
        <Label htmlFor="stock" width="w-[101px]">Склад (резерв):</Label>
        <SelectField id="stock" value="Олимпийский проспект" width="w-[265px]" open />
        <div className="ml-auto flex h-[25px] rounded-[3px] border border-[#a9adac]">
          <button type="button" className="px-[9px] text-[#1f9a55]">Основной вариант</button>
          <button type="button" aria-label="Добавить вариант" className="w-8 border-l border-[#a9adac] bg-[#f3f4f4] text-[#555]">+</button>
        </div>
      </div>
      <GoodsTable />
    </div>
  </section>
);

const FormFooter = () => (
  <div className="mt-2.5 flex h-[70px] shrink-0 items-start">
    <textarea aria-label="Комментарий" placeholder="Комментарий" className="h-full w-[498px] resize-none rounded-[3px] border border-[#b4b8b7] px-0.5 py-[3px] outline-none placeholder:text-[#c4c6c5]" />
    <button type="button" aria-label="Изменить комментарий" className="h-6 w-[22px] rounded-r-[3px] border border-l-0 border-[#b4b8b7] text-[#555]">...</button>
    <div className="ml-auto flex flex-col gap-2.5 pt-1">
      <div className="flex items-center">
        <Label htmlFor="discount-percent" width="w-[103px]">Скидка руч., %:</Label>
        <InputField id="discount-percent" value="100,00" width="w-[135px]" icon={<CalcIcon />} action="Калькулятор" right />
      </div>
      <div className="flex items-center">
        <Label htmlFor="discount-sum" width="w-[103px]">Скидка руч., Σ:</Label>
        <InputField id="discount-sum" value="1,00" width="w-[135px]" icon={<CalcIcon />} action="Калькулятор" right />
      </div>
    </div>
    <dl className="ml-2.5 grid h-full w-[188px] grid-cols-[auto_1fr] content-start gap-y-2.5 bg-[#d9dbda] pt-1 pr-2 pl-[5px] leading-[25px] text-[#5a5a5a]">
      <dt>НДС:</dt>
      <dd className="text-right">0,00</dd>
      <dt>Всего:</dt>
      <dd className="text-right">0,00</dd>
    </dl>
  </div>
);

const EdgeIcon: React.FC<{ className: string }> = ({ className }) => (
  <svg viewBox="0 0 24 24" className={className}>
    <circle cx="12" cy="12" r="12" fill="#1673c4" />
    <path d="M0 11C1 4 6 0 12 0c7 0 12 5 12 10.500 0 4-3 6-6 6-2.500 0-4-1-4-2 0-.8 1.500-1.500 1.500-3.500C15.500 8.500 12 6 8 6c-4 0-7 2.500-8 5z" fill="#45b9d8" />
    <path d="M13 .1C19 .5 24 5 24 10.500c0 4-3 6-6 6-2.500 0-4-1-4-2 0-.8 1.500-1.500 1.500-3.500 0-4 0-7-2.500-10.900z" fill="#5fd58e" />
    <path d="M8.500 10c-2 5 1.500 11 8 11.500 2.500 0 4-1 5-2-2 3-5.500 4.500-9.500 4.500-4 0-6-3-6-7 0-3 1-5.500 2.500-7z" fill="#0d4a94" />
  </svg>
);

const pinnedApps = [
  {
    title: 'Пуск',
    icon: <svg viewBox="0 0 24 24" className="size-6" fill="#4cc2ff"><path d="M0 0h11.500v11.500H0zM12.500 0H24v11.500H12.500zM0 12.500h11.500V24H0zM12.500 12.500H24V24H12.500z" /></svg>,
  },
  {
    title: 'Проводник',
    icon: (
      <svg viewBox="0 0 26 24" className="h-6 w-[26px]">
        <path d="M0 2.500C0 1 .8.500 2 .500h7L11.500 3H24c1.200 0 2 .8 2 2v5H0z" fill="#e3a51a" />
        <path d="M0 5h9l2.500-2H26v20H0z" fill="#fccf4d" />
        <path d="M5 23v-4.500c0-1.500.8-2.500 2.500-2.500h11c1.700 0 2.500 1 2.500 2.500V23z" fill="#1877b8" />
        <path d="M8 19.500h10" stroke="#0c4f84" strokeWidth="1.5" />
      </svg>
    ),
  },
  { title: 'Edge', icon: <EdgeIcon className="size-6" />, running: true },
  {
    title: 'Удаленный рабочий стол',
    icon: (
      <svg viewBox="0 0 24 24" className="size-6">
        <path d="M3 0 21 2.500 18.500 17 0 14z" fill="#c6cbd9" />
        <path d="M4.500 2 19 4 17 14.500 2 12z" fill="#1b2fb8" />
        <path d="M11 3l8 1-2 10z" fill="#5b76e0" />
        <ellipse cx="10" cy="20" rx="6" ry="3" fill="#c8ccd8" />
        <circle cx="18" cy="18" r="5.500" fill="#e4f1e2" />
        <path d="M14.500 16.500l2.500 2-2 2M21.500 15l-2.500 2 2 2" stroke="#3a9a3a" fill="none" strokeWidth="1.3" />
      </svg>
    ),
  },
  {
    title: 'Айтон',
    icon: <svg viewBox="0 0 20 20" className="size-5"><rect width="20" height="20" rx="4" fill="#fff" /><path d="M10 2.500 14.500 17 10 13.500 5.500 17z" fill="#e2451c" /><path d="M10 9v4" stroke="#fff" /></svg>,
  },
  {
    title: 'Telegram',
    icon: <svg viewBox="0 0 22 22" className="size-[22px]"><circle cx="11" cy="11" r="11" fill="#2c9fd6" /><path d="M4 11 17 5.500 15 16.500l-4-3-2 2-.5-3.500z" fill="#fff" /><path d="M8.500 12 15 7.500 10.500 13z" fill="#b5d5e8" /></svg>,
  },
  {
    title: 'Почта',
    icon: (
      <svg viewBox="0 0 24 24" className="size-6" fill="none" stroke="#e8963a" strokeWidth="2" strokeLinejoin="round">
        <path d="M3.500 16A9.500 9.500 0 1 1 8 20.500L1.500 22z" />
        <path d="M4.500 8l8.500 6.500L21 7M3.500 15.500 9 11.500M21 15.500l-4.500-4" />
      </svg>
    ),
  },
  {
    title: '1С:Предприятие',
    icon: <span className="flex size-[25px] items-center justify-end rounded-[5px] bg-linear-to-b from-[#ffe63a] to-[#f5bd12]"><LogoIcon className="h-[11px] w-[21px] text-[#d04818]" /></span>,
    active: true,
  },
];

const trayIcons = [
  <svg viewBox="0 0 12 7" className="h-[7px] w-3" fill="none" stroke="#eee" strokeWidth="1.4"><path d="M1 6l5-5 5 5" /></svg>,
  <svg viewBox="0 0 16 16" className="size-4"><circle cx="8" cy="8" r="7.500" fill="#eef5ef" /><path d="M5 4.500l3 7.500 3-7.500" fill="none" stroke="#5da26f" strokeWidth="1.4" /></svg>,
  <EdgeIcon className="size-[17px]" />,
  <svg viewBox="0 0 16 16" className="size-4"><circle cx="8" cy="8" r="8" fill="#2f4c86" /><path d="M4 3.500 8 8.500l4-5M8 8.500V13" fill="none" stroke="#fff" strokeWidth="2" /></svg>,
  <svg viewBox="0 0 16 16" className="size-4"><circle cx="7" cy="6" r="5.500" fill="#111" /><path d="M1 5c1-2 5-2.500 8 0l-2 4C4 9 1 7.500 1 5z" fill="#eee" /><circle cx="4" cy="6" r="1.200" fill="#111" /><circle cx="11" cy="11" r="4.500" fill="#efa02f" /><circle cx="11" cy="11" r="2" fill="#f8cf80" /></svg>,
  <svg viewBox="0 0 16 16" className="size-4"><rect width="16" height="16" rx="3.500" fill="#0b84f5" /><path d="M3 4.500h7v7H3zM10.500 7.500 13 5v6l-2.500-2z" fill="#fff" /><circle cx="8" cy="7" r=".9" fill="#0b84f5" /></svg>,
  <svg viewBox="0 0 16 16" className="size-4"><path d="M1 5c3-4 8-4.500 14-4l-1 10c-2 3-6 4-12 4z" fill="#dfe9ea" /><path d="M2 6c3-3 7-3 10-3-3 3-5 6-6 11H2c2-3 3-5 3-8z" fill="#36b7c4" /><path d="M9 14l1-9 5-3-1 9z" fill="#fff" /></svg>,
  <svg viewBox="0 0 18 18" className="size-[18px]"><circle cx="9" cy="9" r="7.800" fill="#111" stroke="#ddd" strokeWidth="1.4" /><circle cx="9" cy="9" r="4.800" fill="#5fd01c" /></svg>,
];

const Taskbar = () => (
  <footer className="grid h-[45px] shrink-0 grid-cols-[1fr_auto_1fr] items-center border-t-2 border-black bg-[linear-gradient(90deg,#1b222b_0%,#1b222b_20%,#13215c_26%,#12205a_48%,#1b1f2e_54%,#1a2030_58%,#0f2266_61%,#18204a_64%,#1c222b_67%,#1b222b_100%)] text-[12px] leading-4 text-[#eee] font-['Open_Sans','Noto_Sans',sans-serif]">
    <button type="button" className="flex items-center gap-2 pl-[18px] text-left">
      <svg viewBox="0 0 26 18" className="h-[18px] w-[26px]">
        <path d="M7 17a6 6 0 0 1-1-11.500A8 8 0 0 1 20 7a5 5 0 0 1 0 10z" fill="#b9cdf5" />
        <path d="M10 7a6 6 0 0 1 10 0c-3 0-5 1-6 3z" fill="#8da8e0" />
      </svg>
      <span className="flex flex-col">
        <span>4°C</span>
        <span className="text-[#c9ccd1]">Облачно</span>
      </span>
    </button>
    <div className="flex h-full">
      {pinnedApps.map((app) => (
        <button key={app.title} type="button" title={app.title} className={`relative flex w-[45px] items-center justify-center rounded ${app.active ? 'bg-white/10' : ''}`}>
          {app.icon}
          {app.active && <span className="absolute bottom-0 h-[3px] w-4 rounded-full bg-[#5db5f0]" />}
          {app.running && <span className="absolute bottom-0 h-[3px] w-1.5 rounded-full bg-[#9aa3b5]" />}
        </button>
      ))}
    </div>
    <div className="flex items-center justify-end pr-5">
      {trayIcons.map((icon, i) => (
        <button key={i} type="button" className="flex w-[33px] justify-center">{icon}</button>
      ))}
      <button type="button" className="ml-1.5 w-7 text-center">РУС<br />RU</button>
      <button type="button" aria-label="Сеть и звук" className="ml-4 flex gap-2">
        <svg viewBox="0 0 18 18" className="size-[18px]" fill="none" stroke="#ddd" strokeWidth="1.3"><path d="M11 2H2v11h13V8M5 16.500h7M8.500 13v3.500M13 1h3.500v4H13zM14.700 5v3" /></svg>
        <svg viewBox="0 0 18 16" className="h-4 w-[18px]" fill="none" stroke="#ddd" strokeWidth="1.3"><path d="M1 5.500h3L8 2v12l-4-3.500H1zM10.500 5.500c1.300 1.500 1.300 3.500 0 5M12.500 3.500c2.500 2.500 2.500 6.500 0 9M14.500 1.500c3.500 3.500 3.500 9.500 0 13" /></svg>
      </button>
      <button type="button" className="ml-3 text-right">16:07<br />24.11.2025</button>
      <button type="button" aria-label="Уведомления" className="ml-2">
        <svg viewBox="0 0 16 18" className="h-[18px] w-4"><path d="M2 13V8a5 5 0 0 1 11 0v5l1.500 1.500H.5z" fill="#e8e8e8" /><path d="M5.500 15.500h4a2 2 0 0 1-4 0z" fill="#e8e8e8" /><path d="M5.500 7.500h3l-3 4h3" fill="none" stroke="#1b222b" strokeWidth="1.2" /><path d="M11.500.8h3.500L11.500 4.500H15" fill="none" stroke="#eee" /></svg>
      </button>
    </div>
  </footer>
);

export default function App() {
  return (
    <div className="flex h-screen overflow-hidden bg-[#111012] text-[13px] leading-4 font-['Liberation_Sans',Arial,sans-serif]">
      <div className="w-[89px] shrink-0 bg-[linear-gradient(180deg,#0a0520_0%,#1d0860_12%,#3e0ca6_24%,#4a0fbe_34%,#3c0a9c_48%,#14052e_50.3%,#14052e_50.8%,#7b2ce6_51.6%,#7b2ce6_52.4%,#420bab_53.2%,#3b0a9a_60%,#2a0773_68%,#160540_78%,#0c0620_88%,#07060b_100%)]" />
      <div className="flex min-w-0 flex-1 flex-col">
        <TopBar />
        <div className="flex min-h-0 flex-1">
          <Sidebar />
          <main className="flex min-w-0 flex-1 flex-col bg-[#fdfefd] pt-2 pr-5 pb-3 pl-3">
            <FormHeader />
            <FormFields />
            <GoodsPanel />
            <FormFooter />
          </main>
        </div>
        <div className="flex h-8 shrink-0 items-start gap-1.5 bg-[#adafae] pt-[7px] pl-1.5 text-[#222]">
          <button type="button" aria-label="Показатели" className="flex h-[21px] w-[23px] items-center justify-center rounded-xs bg-[#f1f1f1]">
            <svg viewBox="0 0 16 14" className="h-3.5 w-4" fill="#f1f1f1" stroke="#444"><path d="M5.500.5h10v7h-10z" /><path d="M.5 4.500h10v7H.5zM3 13.500h5" /></svg>
          </button>
          <span className="whitespace-pre">{'Текущие вызовы: 0   Накопленные вызовы: 756'}</span>
        </div>
        <Taskbar />
      </div>
      <div className="w-[89px] shrink-0 bg-[linear-gradient(180deg,#151217_0%,#1b171c_30%,#1a171a_49.5%,#0b090b_50.4%,#4a4448_51.6%,#433e41_52.2%,#161315_53.2%,#171415_70%,#100e0f_100%)]" />
    </div>
  );
}
